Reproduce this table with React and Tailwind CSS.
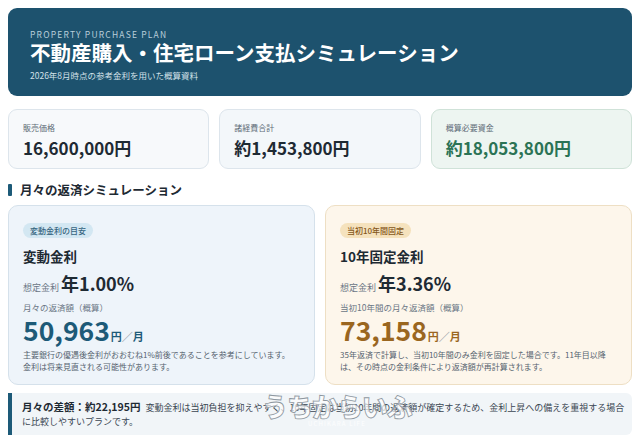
import React from "react";

const summary = [
  { label: "販売価格", value: "16,600,000円", box: "bg-[#f7f9fb] border-[#dde5ec]", text: "text-[#1e2a33]" },
  { label: "諸経費合計", value: "約1,453,800円", box: "bg-[#f3f7fa] border-[#dde5ec]", text: "text-[#1e2a33]" },
  { label: "概算必要資金", value: "約18,053,800円", box: "bg-[#edf5f1] border-[#cfe2d8]", text: "text-[#2b7355]" },
];

const PlanCard = ({ box, badge, badgeCls, title, rate, payLabel, pay, payCls, note }) => {
  return (
    <div className={`border rounded-[10px] px-[14px] pt-[17px] pb-[12px] h-[180px] ${box}`}>
      <div className="flex">
        <span className={`flex items-center h-[15px] px-[7px] rounded-full text-[8px] font-medium ${badgeCls}`}>
          {badge}
        </span>
      </div>
      <h3 className="mt-[9px] text-[13.5px] leading-[18px] font-bold text-[#1e2a33]">{title}</h3>
      <div className="mt-[5px] flex items-baseline gap-[2px] h-[26px]">
        <span className="text-[9px] text-[#6b7785]">想定金利</span>
        <span className="text-[18px] leading-[26px] font-bold text-[#1e2a33]">{rate}</span>
      </div>
      <p className="mt-[5px] text-[8.5px] leading-[12px] text-[#6b7785]">{payLabel}</p>
      <div className={`flex items-baseline h-[34px] ${payCls}`}>
        <span className="text-[26.5px] font-bold leading-[34px]">{pay}</span>
        <span className="text-[11px] font-bold ml-[1px]">円</span>
        <span className="text-[11px] font-bold text-[#7d8a96]">／</span>
        <span className="text-[11px] font-bold">月</span>
      </div>
      <p className="mt-[2px] text-[8px] leading-[11.5px] text-[#56636f]">{note}</p>
    </div>
  );
};

const App = () => {
  return (
    <div className="w-[640px] h-[445px] overflow-hidden bg-white px-[8px] pt-[8px] font-['Noto_Sans_CJK_JP','Noto_Sans',sans-serif]">
      {/* header */}
      <header className="bg-[#1d526e] rounded-[9px] pl-[22px] pt-[20px] pb-[15px]">
        <p className="text-[8.5px] leading-[12px] tracking-[0.14em] text-[#b9cfdb]">PROPERTY PURCHASE PLAN</p>
        <h1 className="text-[20.5px] leading-[24px] font-bold text-white">不動産購入・住宅ローン支払シミュレーション</h1>
        <p className="mt-[5px] text-[8.5px] leading-[12px] text-[#d3e1e9]">2026年8月時点の参考金利を用いた概算資料</p>
      </header>

      {/* summary */}
      <div className="mt-[13px] grid grid-cols-3 gap-[10px]">
        {summary.map((item) => (
          <div key={item.label} className={`border rounded-[9px] h-[60px] pl-[14px] pt-[12px] ${item.box}`}>
            <p className="text-[8px] leading-[12px] text-[#5d6b77]">{item.label}</p>
            <p className={`mt-[2px] text-[17px] leading-[24px] font-bold ${item.text}`}>{item.value}</p>
          </div>
        ))}
      </div>

      {/* section title */}
      <div className="mt-[13px] flex items-center gap-[8px] h-[16px]">
        <span className="w-[4px] h-[12px] bg-[#1d5a78] rounded-[1px]" />
        <h2 className="text-[12.5px] font-bold text-[#1e2a33]">月々の返済シミュレーション</h2>
      </div>

      <div className="mt-[7px] grid grid-cols-2 gap-[10px]">
        <PlanCard
          box="bg-[#eef4fa] border-[#d5e1eb]"
          badge="変動金利の目安"
          badgeCls="bg-[#d3e7f2] text-[#36657f]"
          title="変動金利"
          rate="年1.00%"
          payLabel="月々の返済額（概算）"
          pay="50,963"
          payCls="text-[#1d5a78]"
          note={<>主要銀行の優遇後金利がおおむね1%前後であることを参考にしています。<br />金利は将来見直される可能性があります。</>}
        />
        <PlanCard
          box="bg-[#fdf6eb] border-[#eedfc4]"
          badge="当初10年間固定"
          badgeCls="bg-[#f5e2bd] text-[#85571a]"
          title="10年固定金利"
          rate="年3.36%"
          payLabel="当初10年間の月々返済額（概算）"
          pay="73,158"
          payCls="text-[#9a661f]"
          note="35年返済で計算し、当初10年間のみ金利を固定した場合です。11年目以降は、その時点の金利条件により返済額が再計算されます。"
        />
      </div>

      {/* difference note */}
      <div className="relative mt-[8px] border-l-[4px] border-[#1d5a78] bg-[#f1f5f8] rounded-r-[6px] pl-[10px] pr-[3px] pt-[7px] pb-[6px]">
        <p className="text-[9px] leading-[14px] text-[#3a4652]">
          <span className="text-[10.5px] font-bold text-[#1e2a33] mr-[5px]">月々の差額：約22,195円</span>
          変動金利は当初負担を抑えやすく、10年固定は当初10年間の返済額が確定するため、金利上昇への備えを重視する場合に比較しやすいプランです。
        </p>
        <div className="pointer-events-none absolute left-[250px] top-[-1px] flex flex-col items-center">
          <span className="text-[26px] leading-[28px] font-black tracking-[-0.04em] text-white/70 [-webkit-text-stroke:0.8px_#8e979f]">うちからいふ</span>
          <span className="text-[6px] leading-[8px] tracking-[0.2em] text-white/80">UCHIKARA LIFE</span>
        </div>
      </div>
    </div>
  );
};

export default App;
